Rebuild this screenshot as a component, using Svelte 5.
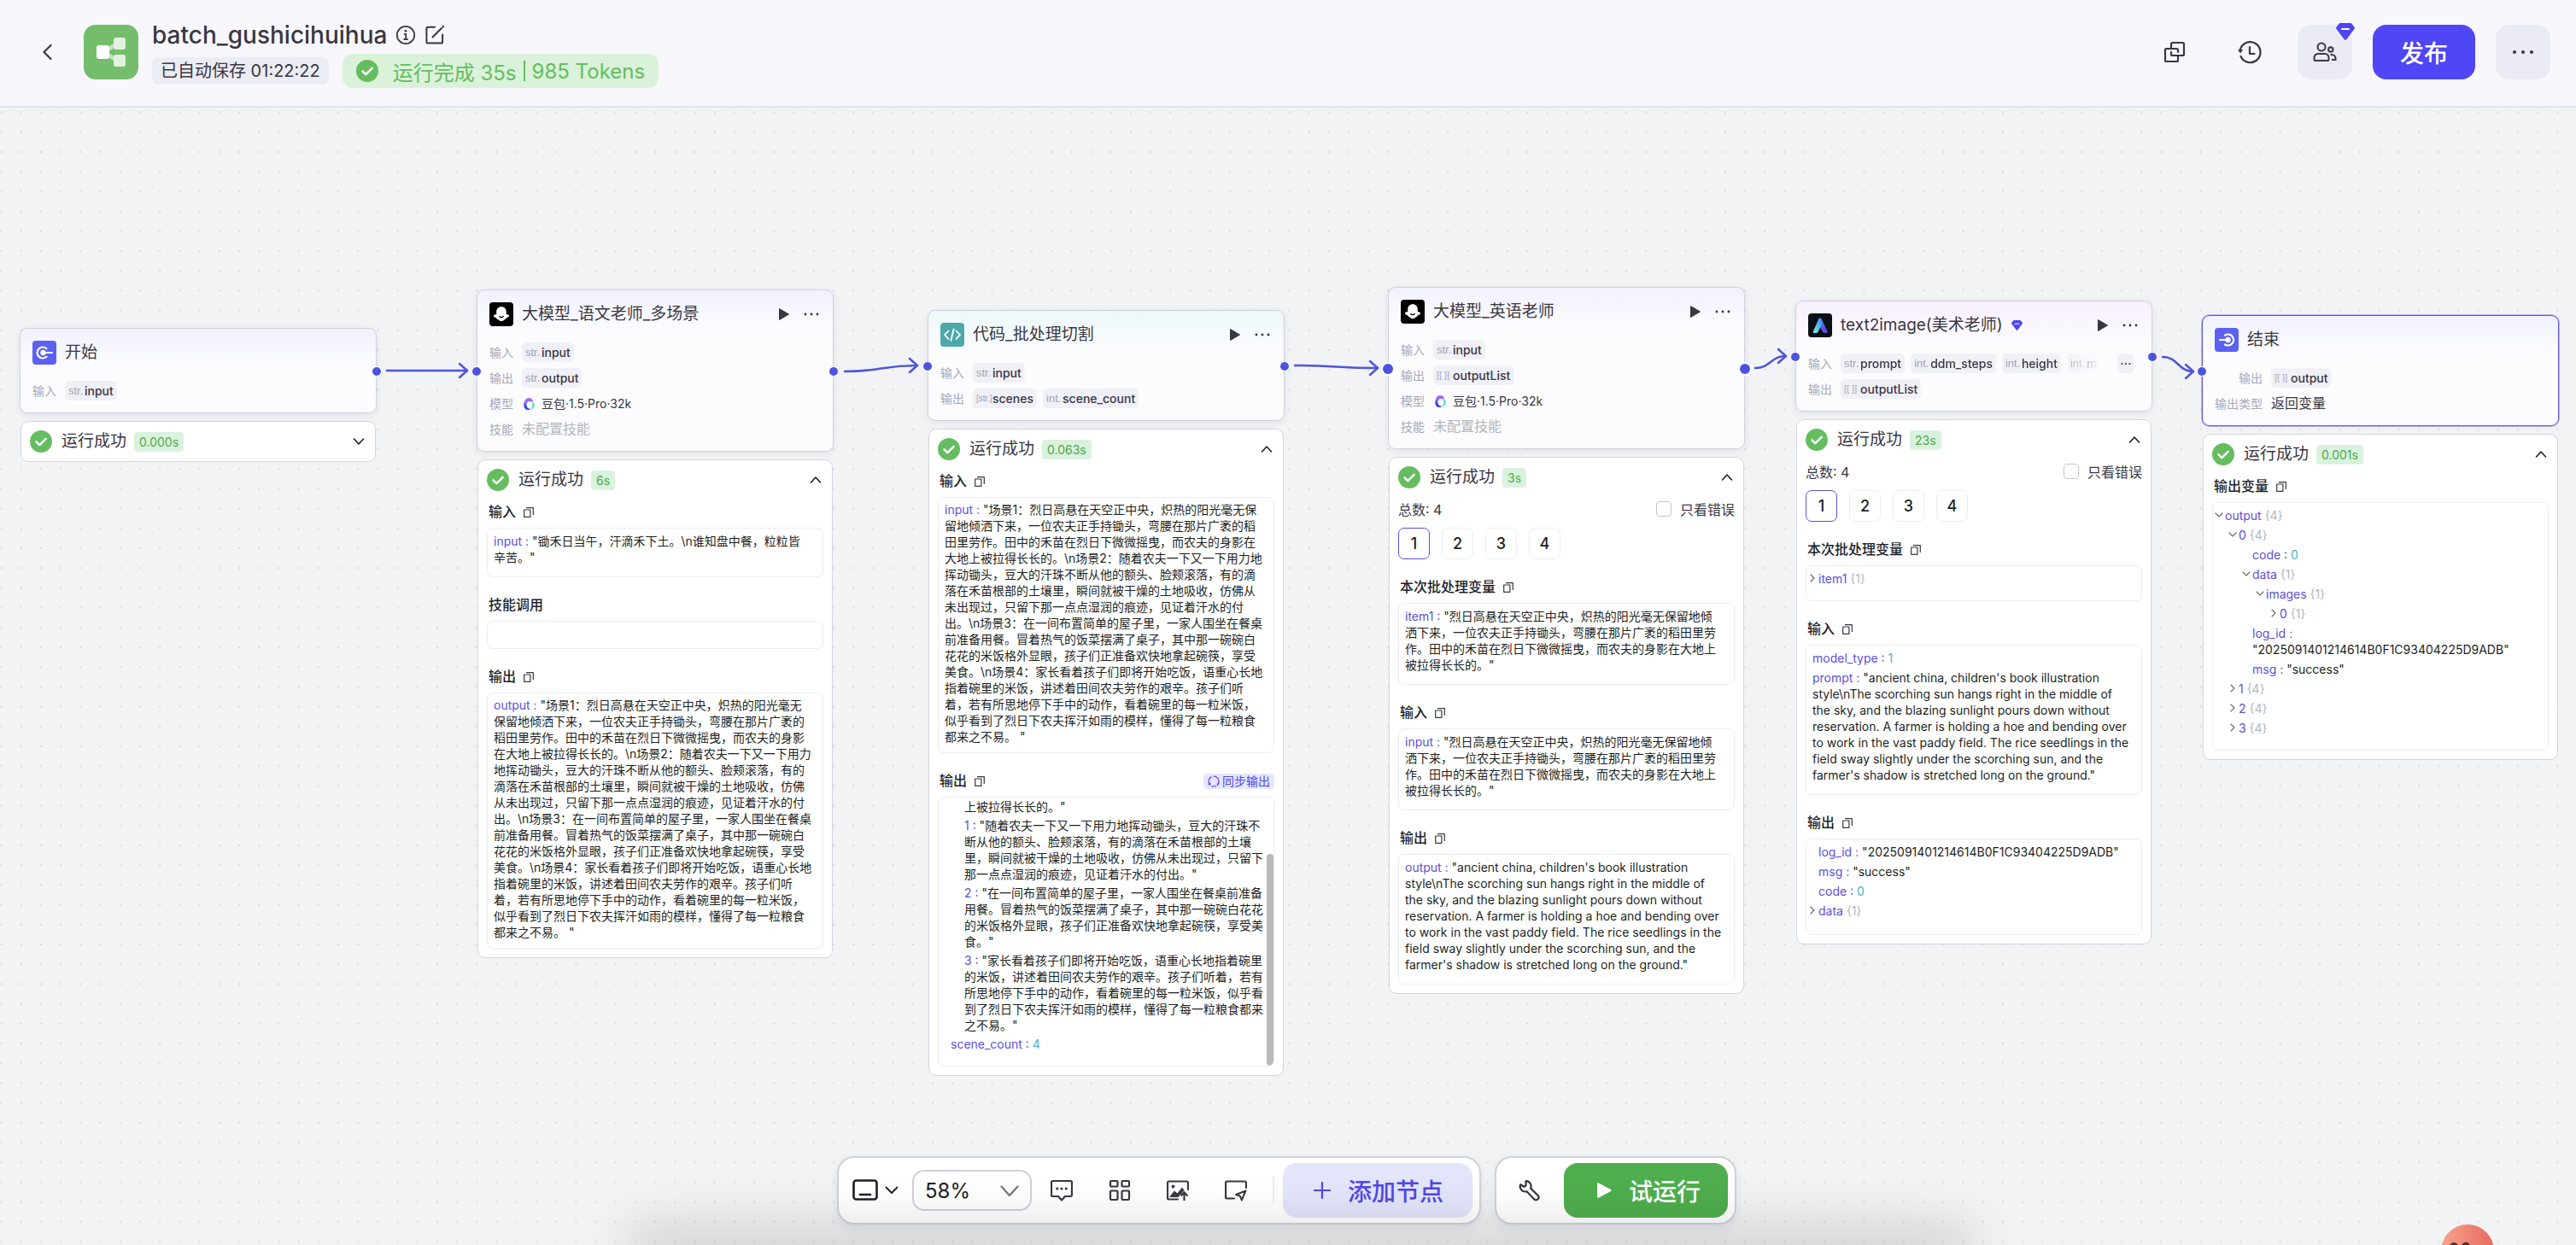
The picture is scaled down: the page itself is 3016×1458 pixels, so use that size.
<script>
  const scene1a = '烈日高悬在天空正中央，炽热的阳光毫无';

  const llmOutput = [
    '"场景1：烈日高悬在天空正中央，炽热的阳光毫无',
    '保留地倾洒下来，一位农夫正手持锄头，弯腰在那片广袤的',
    '稻田里劳作。田中的禾苗在烈日下微微摇曳，而农夫的身影',
    '在大地上被拉得长长的。\\n场景2：随着农夫一下又一下用力',
    '地挥动锄头，豆大的汗珠不断从他的额头、脸颊滚落，有的',
    '滴落在禾苗根部的土壤里，瞬间就被干燥的土地吸收，仿佛',
    '从未出现过，只留下那一点点湿润的痕迹，见证着汗水的付',
    '出。\\n场景3：在一间布置简单的屋子里，一家人围坐在餐桌',
    '前准备用餐。冒着热气的饭菜摆满了桌子，其中那一碗碗白',
    '花花的米饭格外显眼，孩子们正准备欢快地拿起碗筷，享受',
    '美食。\\n场景4：家长看着孩子们即将开始吃饭，语重心长地',
    '指着碗里的米饭，讲述着田间农夫劳作的艰辛。孩子们听',
    '着，若有所思地停下手中的动作，看着碗里的每一粒米饭，',
    '似乎看到了烈日下农夫挥汗如雨的模样，懂得了每一粒粮食',
    '都来之不易。 "'
  ];

  const codeInput = [
    '"场景1：' + scene1a + '保',
    '留地倾洒下来，一位农夫正手持锄头，弯腰在那片广袤的稻',
    '田里劳作。田中的禾苗在烈日下微微摇曳，而农夫的身影在',
    '大地上被拉得长长的。\\n场景2：随着农夫一下又一下用力地',
    '挥动锄头，豆大的汗珠不断从他的额头、脸颊滚落，有的滴',
    '落在禾苗根部的土壤里，瞬间就被干燥的土地吸收，仿佛从',
    '未出现过，只留下那一点点湿润的痕迹，见证着汗水的付',
    '出。\\n场景3：在一间布置简单的屋子里，一家人围坐在餐桌',
    '前准备用餐。冒着热气的饭菜摆满了桌子，其中那一碗碗白',
    '花花的米饭格外显眼，孩子们正准备欢快地拿起碗筷，享受',
    '美食。\\n场景4：家长看着孩子们即将开始吃饭，语重心长地',
    '指着碗里的米饭，讲述着田间农夫劳作的艰辛。孩子们听',
    '着，若有所思地停下手中的动作，看着碗里的每一粒米饭，',
    '似乎看到了烈日下农夫挥汗如雨的模样，懂得了每一粒粮食',
    '都来之不易。 "'
  ];

  const batchItem = [
    '"' + scene1a + '保留地倾',
    '洒下来，一位农夫正手持锄头，弯腰在那片广袤的稻田里劳',
    '作。田中的禾苗在烈日下微微摇曳，而农夫的身影在大地上',
    '被拉得长长的。"'
  ];

  const prompt = [
    '"ancient china, children\'s book illustration',
    'style\\nThe scorching sun hangs right in the middle of',
    'the sky, and the blazing sunlight pours down without',
    'reservation. A farmer is holding a hoe and bending over',
    'to work in the vast paddy field. The rice seedlings in the',
    'field sway slightly under the scorching sun, and the',
    'farmer\'s shadow is stretched long on the ground."'
  ];

  const model = { label: '模型', model: '豆包·1.5·Pro·32k' };
  const skill = { label: '技能', muted: '未配置技能' };
  const str = 'str.';
  const int = 'int.';
  const arr = '[{ }]';

  const nodes = [
    {
      id: 'start', x: 23, y: 258, title: '开始', icon: 'start', right: true,
      rows: [{ label: '输入', tags: [[str, 'input']] }],
      time: '0.000s', open: false, sections: []
    },
    {
      id: 'llm-cn', x: 558, y: 213, title: '大模型_语文老师_多场景', icon: 'llm', left: true, right: true, actions: true,
      rows: [
        { label: '输入', tags: [[str, 'input']] },
        { label: '输出', tags: [[str, 'output']] },
        model, skill
      ],
      time: '6s', open: true,
      sections: [
        { title: '输入', copy: true, lines: [{ k: 'input', v: ['"锄禾日当午，汗滴禾下土。\\n谁知盘中餐，粒粒皆', '辛苦。"'] }] },
        { title: '技能调用', lines: [] },
        { title: '输出', copy: true, long: true, lines: [{ k: 'output', v: llmOutput }] }
      ]
    },
    {
      id: 'code', x: 1086, y: 237, title: '代码_批处理切割', icon: 'code', tint: 'teal', left: true, right: true, actions: true,
      rows: [
        { label: '输入', tags: [[str, 'input']] },
        { label: '输出', tags: [['[str.]', 'scenes'], [int, 'scene_count']] }
      ],
      time: '0.063s', open: true,
      sections: [
        { title: '输入', copy: true, long: true, lines: [{ k: 'input', v: codeInput }] },
        {
          title: '输出', copy: true, sync: true, scroll: true,
          lines: [
            { level: 1, v: ['上被拉得长长的。"'] },
            {
              level: 1, k: '1',
              v: [
                '"随着农夫一下又一下用力地挥动锄头，豆大的汗珠不',
                '断从他的额头、脸颊滚落，有的滴落在禾苗根部的土壤',
                '里，瞬间就被干燥的土地吸收，仿佛从未出现过，只留下',
                '那一点点湿润的痕迹，见证着汗水的付出。"'
              ]
            },
            {
              level: 1, k: '2',
              v: [
                '"在一间布置简单的屋子里，一家人围坐在餐桌前准备',
                '用餐。冒着热气的饭菜摆满了桌子，其中那一碗碗白花花',
                '的米饭格外显眼，孩子们正准备欢快地拿起碗筷，享受美',
                '食。"'
              ]
            },
            {
              level: 1, k: '3',
              v: [
                '"家长看着孩子们即将开始吃饭，语重心长地指着碗里',
                '的米饭，讲述着田间农夫劳作的艰辛。孩子们听着，若有',
                '所思地停下手中的动作，看着碗里的每一粒米饭，似乎看',
                '到了烈日下农夫挥汗如雨的模样，懂得了每一粒粮食都来',
                '之不易。"'
              ]
            },
            { level: 0, k: 'scene_count', num: '4' }
          ]
        }
      ]
    },
    {
      id: 'llm-en', x: 1625, y: 210, title: '大模型_英语老师', icon: 'llm', left: true, right: true, actions: true, big: true,
      rows: [
        { label: '输入', tags: [[str, 'input']] },
        { label: '输出', tags: [[arr, 'outputList']] },
        model, skill
      ],
      time: '3s', open: true, batch: true,
      sections: [
        { title: '本次批处理变量', copy: true, lines: [{ k: 'item1', v: batchItem }] },
        { title: '输入', copy: true, lines: [{ k: 'input', v: batchItem }] },
        { title: '输出', copy: true, lines: [{ k: 'output', v: prompt }] }
      ]
    },
    {
      id: 't2i', x: 2102, y: 226, title: 'text2image(美术老师)', icon: 't2i', tint: 'pink', gem: true, left: true, right: true, actions: true,
      rows: [
        { label: '输入', more: true, tags: [[str, 'prompt'], [int, 'ddm_steps'], [int, 'height'], [int, 'm']] },
        { label: '输出', tags: [[arr, 'outputList']] }
      ],
      time: '23s', open: true, batch: true,
      sections: [
        { title: '本次批处理变量', copy: true, tree: true, lines: [{ level: 0, k: 'item1', count: '{1}', fold: 'closed' }] },
        { title: '输入', copy: true, lines: [{ k: 'model_type', num: '1' }, { k: 'prompt', v: prompt }] },
        {
          title: '输出', copy: true, tree: true,
          lines: [
            { level: 0, k: 'log_id', v: ['"2025091401214614B0F1C93404225D9ADB"'] },
            { level: 0, k: 'msg', v: ['"success"'] },
            { level: 0, k: 'code', num: '0' },
            { level: 0, k: 'data', count: '{1}', fold: 'closed', last: true }
          ]
        }
      ]
    },
    {
      id: 'end', x: 2578, y: 243, title: '结束', icon: 'end', left: true, selected: true, wide: true,
      rows: [
        { label: '输出', tags: [[arr, 'output']] },
        { label: '输出类型', plain: '返回变量' }
      ],
      time: '0.001s', open: true,
      sections: [
        {
          title: '输出变量', copy: true, tree: true,
          lines: [
            { level: 0, k: 'output', count: '{4}', fold: 'open' },
            { level: 1, k: '0', count: '{4}', fold: 'open' },
            { level: 2, k: 'code', num: '0' },
            { level: 2, k: 'data', count: '{1}', fold: 'open' },
            { level: 3, k: 'images', count: '{1}', fold: 'open' },
            { level: 4, k: '0', count: '{1}', fold: 'closed' },
            { level: 2, k: 'log_id', v: ['', '"2025091401214614B0F1C93404225D9ADB"'] },
            { level: 2, k: 'msg', v: ['"success"'] },
            { level: 1, k: '1', count: '{4}', fold: 'closed' },
            { level: 1, k: '2', count: '{4}', fold: 'closed' },
            { level: 1, k: '3', count: '{4}', fold: 'closed' }
          ]
        }
      ]
    }
  ];

  // Each edge runs from a source port to the tip of its arrow.
  const edges = [
    [453, 308, 547, 308],
    [989, 309, 1074, 302],
    [1516, 302, 1613, 305],
    [2055, 305, 2091, 291],
    [2532, 292, 2568, 309]
  ];

  function curve([x1, y1, x2, y2]) {
    const mid = (x1 + x2) / 2;
    return `M${x1} ${y1}C${mid} ${y1} ${mid} ${y2} ${x2} ${y2}`;
  }

  let current = $state({ 'llm-en': 1, t2i: 1 });
</script>

{#snippet check()}
  <svg class="check" viewBox="0 0 26 26" aria-hidden="true">
    <circle cx="13" cy="13" r="13" fill="#65bd60" />
    <path d="M7.5 13.3l3.9 3.9 7.3-7.4" fill="none" stroke="#fff" stroke-width="2.4" stroke-linecap="round" stroke-linejoin="round" />
  </svg>
{/snippet}

{#snippet gem()}
  <svg class="gem" viewBox="0 0 22 20" aria-hidden="true">
    <path d="M5 0h12a2 2 0 0 1 1.6.8l3 4.2a1.6 1.6 0 0 1-.1 2L12.2 19.3a1.6 1.6 0 0 1-2.4 0L.5 7a1.6 1.6 0 0 1-.1-2l3-4.200A2 2 0 0 1 5 0z" fill="#4f46f0" />
    <path d="M7 7h8" stroke="#fff" stroke-width="2" stroke-linecap="round" />
  </svg>
{/snippet}

{#snippet nodeIcon(kind)}
  <svg class="node-icon" viewBox="0 0 28 28" aria-hidden="true">
    {#if kind === 'start'}
      <rect width="28" height="28" rx="4" fill="#5c62f0" />
      <path d="M16.500 9.200A6.500 6.500 0 1 0 16.500 18.800" fill="none" stroke="#fff" stroke-width="2.200" stroke-linecap="round" />
      <circle cx="12.500" cy="14" r="3.200" fill="#fff" />
      <path d="M12 14h11" stroke="#fff" stroke-width="2" stroke-linecap="round" />
    {:else if kind === 'end'}
      <rect width="28" height="28" rx="4" fill="#5c62f0" />
      <path d="M12 8.500A6.500 6.500 0 1 1 12 19.500" fill="none" stroke="#fff" stroke-width="2.200" stroke-linecap="round" />
      <circle cx="15.500" cy="14" r="3.200" fill="#fff" />
      <path d="M6 14h10" stroke="#fff" stroke-width="2" stroke-linecap="round" />
    {:else if kind === 'code'}
      <rect width="28" height="28" rx="4" fill="#4ba9ac" />
      <path d="M9.500 9.500L5 14.200l4.500 4.700M18.500 9.500l4.500 4.700-4.500 4.700M15.600 7.500l-3.200 13.400" fill="none" stroke="#fff" stroke-width="1.800" stroke-linecap="round" stroke-linejoin="round" />
    {:else if kind === 'llm'}
      <rect width="28" height="28" rx="4" fill="#000" />
      <path d="M14 5.200c-3.500 0-5.800 2.500-5.800 6v3.200c-1.500-.3-3 .4-3.200 1.300-.3 1.200 1.300 2 3 2.200.3 1.300 1.300 2.200 2.400 2.300.7 1.200 2.200 1.800 3.600 1.800s2.900-.6 3.600-1.800c1.100-.1 2.100-1 2.400-2.300 1.700-.2 3.300-1 3-2.200-.2-.9-1.700-1.600-3.200-1.300v-3.200c0-3.500-2.300-6-5.800-6z" fill="#fff" />
      <path d="M11.700 16.400c.6.9 1.400 1.300 2.300 1.300s1.700-.4 2.300-1.300" fill="none" stroke="#000" stroke-width="1.200" stroke-linecap="round" />
    {:else}
      <defs>
        <linearGradient id="t2i-a" x1="0" y1="1" x2="1" y2="0">
          <stop offset="0" stop-color="#7df0e0" />
          <stop offset="1" stop-color="#3d7df5" />
        </linearGradient>
        <linearGradient id="t2i-b" x1="0" y1="0" x2="1" y2="1">
          <stop offset="0" stop-color="#3a8df5" />
          <stop offset="1" stop-color="#6a35e8" />
        </linearGradient>
      </defs>
      <rect width="28" height="28" rx="4" fill="#0d0f16" />
      <path d="M12.200 5.800h3l7.400 15.200c.4 1-.2 2-1.300 2h-1.800a3 3 0 0 1-2.700-1.700L11 10z" fill="url(#t2i-b)" />
      <path d="M12.200 6.800a1.800 1.800 0 0 1 3.200 0l1.800 3.600-5.400 11A3 3 0 0 1 9.100 23H7.300c-1.100 0-1.800-1-1.300-2z" fill="url(#t2i-a)" />
    {/if}
  </svg>
{/snippet}

{#snippet tag([type, name])}
  <span class="tag"><span class="type" class:list={type.startsWith('[')}>{type}</span>{name}</span>
{/snippet}

<div class="page">
  <header class="topbar">
    <button class="bare back" aria-label="返回">
      <svg viewBox="0 0 14 20" width="14" height="20"><path d="M11.500 2L3.500 10l8 8" fill="none" stroke="#383743" stroke-width="2.200" stroke-linecap="round" stroke-linejoin="round" /></svg>
    </button>
    <svg class="logo" viewBox="0 0 64 64" aria-hidden="true">
      <rect width="64" height="64" rx="14" fill="#74be6b" />
      <path d="M24 32L42 20M24 32l18 12" stroke="#c0e2bc" stroke-width="5" />
      <rect x="35" y="15" width="14" height="14" rx="3" fill="#e2f2e0" />
      <rect x="35" y="35" width="14" height="14" rx="3" fill="#e2f2e0" />
      <rect x="15" y="24" width="15" height="16" rx="3" fill="#fff" />
    </svg>
    <div class="info">
      <div class="name-row">
        <h1>batch_gushicihuihua</h1>
        <svg viewBox="0 0 24 24" width="24" height="24" aria-hidden="true">
          <circle cx="12" cy="12" r="10.200" fill="none" stroke="#383743" stroke-width="1.800" />
          <circle cx="12" cy="7.300" r="1.400" fill="#383743" />
          <path d="M10 10.800h2.200v6M9.500 17h5.200" fill="none" stroke="#383743" stroke-width="1.800" />
        </svg>
        <button class="bare" aria-label="编辑">
          <svg viewBox="0 0 24 24" width="24" height="24"><path d="M12 2.800H4a1.600 1.600 0 0 0-1.600 1.600V20A1.600 1.600 0 0 0 4 21.600h15.500A1.600 1.600 0 0 0 21.100 20v-8.500M9.500 14.500L20 4M21.300 1.700l.8.8" fill="none" stroke="#383743" stroke-width="2" stroke-linecap="round" /></svg>
        </button>
      </div>
      <div class="status-row">
        <span class="saved">已自动保存 01:22:22</span>
        <span class="done">{@render check()}运行完成 35s<i></i>985 Tokens</span>
      </div>
    </div>
    <div class="actions">
      <button class="square clear" aria-label="复制">
        <svg viewBox="0 0 26 26" width="26" height="26"><path d="M9 7.500V3.500A1.500 1.500 0 0 1 10.500 2h12A1.500 1.500 0 0 1 24 3.500v12a1.500 1.500 0 0 1-1.500 1.500h-12A1.500 1.500 0 0 1 9 15.500V13M17 18.500v4a1.500 1.500 0 0 1-1.500 1.500h-12A1.500 1.500 0 0 1 2 22.500v-12A1.500 1.500 0 0 1 3.500 9h12a1.500 1.500 0 0 1 1.500 1.500V13" fill="none" stroke="#383743" stroke-width="2.200" stroke-linecap="round" /></svg>
      </button>
      <button class="square clear" aria-label="历史">
        <svg viewBox="0 0 30 30" width="30" height="30"><path d="M3.700 13A12 12 0 1 1 4.500 20" fill="none" stroke="#383743" stroke-width="2.200" stroke-linecap="round" /><path d="M.8 12.500l6.400-.6-3 4.500z" fill="#383743" /><path d="M15 9v8h5.500" fill="none" stroke="#383743" stroke-width="2.200" stroke-linecap="round" stroke-linejoin="round" /></svg>
      </button>
      <button class="square collab" aria-label="协作">
        <svg viewBox="0 0 28 24" width="28" height="24"><g fill="none" stroke="#383743" stroke-width="2"><circle cx="10" cy="6" r="4.500" /><path d="M1.500 20.500v-2a4.500 4.500 0 0 1 4.500-4.500h8a4.500 4.500 0 0 1 4.500 4.500v2a1.500 1.500 0 0 1-1.500 1.500H3a1.500 1.500 0 0 1-1.500-1.500z" /><circle cx="20.800" cy="9" r="2.700" /><path d="M20.500 15h1.500a4.500 4.500 0 0 1 4.500 4.500v1.500h-4.500" /></g></svg>
        <span class="badge">{@render gem()}</span>
      </button>
      <button class="publish">发布</button>
      <button class="square" aria-label="更多">
        <svg viewBox="0 0 26 6" width="26" height="6"><g fill="#383743"><circle cx="3" cy="3" r="2" /><circle cx="13" cy="3" r="2" /><circle cx="23" cy="3" r="2" /></g></svg>
      </button>
    </div>
  </header>

  <main class="canvas">
    <svg class="layer" aria-hidden="true">
      <defs>
        <pattern id="grid" width="20" height="20" patternUnits="userSpaceOnUse" patternTransform="translate(-10 -6) scale(1.160)">
          <circle cx="10" cy="10" r="1" fill="#d8dade" />
        </pattern>
      </defs>
      <rect width="100%" height="100%" fill="url(#grid)" />
      <g fill="none" stroke="#4e55d8" stroke-width="2.500" stroke-linecap="round" stroke-linejoin="round">
        {#each edges as e}
          <path d={curve(e)} />
          <path d={`M${e[2] - 9} ${e[3] - 8}l9 8-9 8`} />
        {/each}
      </g>
    </svg>

    {#each nodes as n (n.id)}
      <article class="node" style:left="{n.x}px" style:top="{n.y}px">
        <section class="head {n.tint ?? ''}" class:selected={n.selected} class:big={n.big}>
          {#if n.left}<span class="port in"></span>{/if}
          {#if n.right}<span class="port out"></span>{/if}
          <div class="title-row">
            {@render nodeIcon(n.icon)}
            <h2>{n.title}</h2>
            {#if n.gem}{@render gem()}{/if}
            {#if n.actions}
              <div class="node-actions">
                <button class="bare" aria-label="运行节点"><svg viewBox="0 0 12 14" width="12" height="14"><path d="M0 .8v12.400a.6.6 0 0 0 .9.5l10.600-6.200a.6.6 0 0 0 0-1L.9.3A.6.6 0 0 0 0 .8z" fill="#383743" /></svg></button>
                <button class="bare" aria-label="节点菜单"><svg viewBox="0 0 18 4" width="18" height="4"><g fill="#383743"><circle cx="2" cy="2" r="1.400" /><circle cx="9" cy="2" r="1.400" /><circle cx="16" cy="2" r="1.400" /></g></svg></button>
              </div>
            {/if}
          </div>
          <div class="rows" class:wide={n.wide}>
            {#each n.rows as r}
              <div class="row">
                <span class="label">{r.label}</span>
                {#if r.tags}
                  <div class="tags" class:fade={r.more}>{#each r.tags as t}{@render tag(t)}{/each}</div>
                  {#if r.more}<button class="more" aria-label="更多参数"><svg viewBox="0 0 12 4" width="12" height="4"><g fill="#383743"><circle cx="1.500" cy="2" r="1.100" /><circle cx="6" cy="2" r="1.100" /><circle cx="10.500" cy="2" r="1.100" /></g></svg></button>{/if}
                {:else if r.model}
                  <span class="model">
                    <svg viewBox="0 0 16 16" width="16" height="16" aria-hidden="true">
                      <path d="M3 9C2.600 4 4.500 1 8 1c3 0 4.800 1.500 5 4l-3 .5C7.500 4 6 6 5.500 9z" fill="#a06cf0" />
                      <path d="M11.500 4.500c2.300.6 3.500 2.400 3.500 4.500 0 3-2 5.300-5 5.700 1.400-1.500 2-3.200 2-5.500 0-2-.1-3.300-.5-4.700z" fill="#6fe0cf" />
                      <path d="M3.200 5c-1.500 3.500-1.400 9.300 3 10 2 .2 3.300-.2 4.300-1-3-.2-4.700-1.800-4.800-4.200C3.800 9 3.100 7.500 3.200 5z" fill="#3a47e0" />
                    </svg>{r.model}</span>
                {:else if r.muted}
                  <span class="muted">{r.muted}</span>
                {:else}
                  <span class="plain">{r.plain}</span>
                {/if}
              </div>
            {/each}
          </div>
        </section>

        <section class="result">
          <div class="result-row">
            {@render check()}
            <h3>运行成功</h3>
            <span class="time">{n.time}</span>
            <button class="bare toggle" aria-label={n.open ? '收起' : '展开'}>
              <svg viewBox="0 0 14 10" width="14" height="10"><path d={n.open ? 'M1.500 8L7 2l5.500 6' : 'M1.500 2L7 8l5.500-6'} fill="none" stroke="#1c1f23" stroke-width="1.600" stroke-linecap="round" stroke-linejoin="round" /></svg>
            </button>
          </div>
          {#if n.batch}
            <div class="total-row">
              <span>总数: 4</span>
              <label><input type="checkbox" />只看错误</label>
            </div>
            <div class="pages">
              {#each [1, 2, 3, 4] as p}
                <button class:active={current[n.id] === p} onclick={() => (current[n.id] = p)}>{p}</button>
              {/each}
            </div>
          {/if}
          {#each n.sections as s, i}
            <div class="sec-head" class:first={i === 0 && !n.batch}>
              <h4>{s.title}</h4>
              {#if s.copy}
                <button class="bare" aria-label="复制{s.title}"><svg viewBox="0 0 12 12" width="12" height="12"><path d="M.7 3h7.200v8.300H.7zM3 .7h8.300v8.300" fill="none" stroke="#383743" stroke-width="1.200" stroke-linejoin="round" /></svg></button>
              {/if}
              {#if s.sync}
                <button class="sync"><svg viewBox="0 0 14 14" width="14" height="14" aria-hidden="true"><path d="M2.500 11A6 6 0 0 1 4.500 1.600M6.500 1a6 6 0 0 1 5.300 9.500M9.800 12.300a6 6 0 0 1-5.300.1M2.800 8.500V11H.6M11.500 12.500V10h2" fill="none" stroke="#5147ff" stroke-width="1.200" /></svg>同步输出</button>
              {/if}
            </div>
            <div class="box" class:long={s.long} class:scroll={s.scroll} class:tree={s.tree} class:empty={!s.lines.length}>
              {#each s.lines as l}
                <div class="line {l.level === undefined ? '' : 'l' + l.level}" class:last={l.last}>{#if l.fold}<button class="bare fold" aria-label="折叠"><svg viewBox="0 0 10 10" width="10" height="10"><path d={l.fold === 'open' ? 'M1 3l4 4 4-4' : 'M3 1l4 4-4 4'} fill="none" stroke="#60636b" stroke-width="1.100" stroke-linecap="round" /></svg></button>{/if}{#if l.k}<span class="key">{l.k}{l.count ? '' : ' :'}</span>{' '}{/if}{#if l.count}<span class="count">{l.count}</span>{:else if l.num}<span class="num">{l.num}</span>{:else}{#each l.v as t, j}<span class:next={j > 0}>{t}</span>{/each}{/if}</div>
              {/each}
              {#if s.scroll}<span class="thumb"></span>{/if}
            </div>
          {/each}
        </section>
      </article>
    {/each}

    <div class="toolbar">
      <div class="panel tools">
        <button class="bare mode" aria-label="交互模式">
          <svg viewBox="0 0 30 26" width="30" height="26"><rect x="1.500" y="1.500" width="27" height="22" rx="3" fill="none" stroke="#1c1f23" stroke-width="2.600" /><path d="M9 18h12" stroke="#1c1f23" stroke-width="2.600" stroke-linecap="round" /></svg>
          <svg viewBox="0 0 16 10" width="16" height="10"><path d="M1.500 1.500L8 8l6.500-6.500" fill="none" stroke="#1c1f23" stroke-width="1.800" stroke-linecap="round" stroke-linejoin="round" /></svg>
        </button>
        <div class="zoom">
          <select aria-label="缩放"><option>58%</option></select>
          <svg viewBox="0 0 22 14" width="22" height="14" aria-hidden="true"><path d="M1.500 1.500L11 12l9.500-10.500" fill="none" stroke="#75767f" stroke-width="2.200" stroke-linecap="round" stroke-linejoin="round" /></svg>
        </div>
        <div class="icons">
          <button class="bare" aria-label="添加注释"><svg viewBox="0 0 26 26" width="26" height="26"><path d="M2.500 2h21a1.500 1.500 0 0 1 1.500 1.500v15a1.500 1.500 0 0 1-1.500 1.500H17l-4 4.500L9 20H2.500A1.500 1.500 0 0 1 1 18.500v-15A1.500 1.500 0 0 1 2.500 2z" fill="none" stroke="#383743" stroke-width="2.200" stroke-linejoin="round" /><g fill="#383743"><circle cx="7.800" cy="11" r="1.600" /><circle cx="13" cy="11" r="1.600" /><circle cx="18.200" cy="11" r="1.600" /></g></svg></button>
          <button class="bare" aria-label="优化布局"><svg viewBox="0 0 26 26" width="26" height="26"><g fill="none" stroke="#383743" stroke-width="2.200"><rect x="2" y="2" width="8.500" height="6.500" rx="1" /><rect x="2" y="13.500" width="8.500" height="10.500" rx="1" /><rect x="15.500" y="2" width="8.500" height="6.500" rx="1" /><rect x="15.500" y="13.500" width="8.500" height="10.500" rx="1" /></g></svg></button>
          <button class="bare" aria-label="导出图片"><svg viewBox="0 0 26 26" width="26" height="26"><path d="M13 23.500H2.500A1.500 1.500 0 0 1 1 22V4a1.500 1.500 0 0 1 1.500-1.500h21A1.500 1.500 0 0 1 25 4v8" fill="none" stroke="#383743" stroke-width="2.200" stroke-linecap="round" /><circle cx="7.500" cy="8.500" r="2" fill="#383743" /><path d="M3 21l6-7.500 3.500 3 5.500-7 2.500 3.500-7 8z" fill="#383743" /><path d="M20.500 25V16M16.500 19.500l4-4.200 4 4.200" fill="none" stroke="#383743" stroke-width="2.200" /></svg></button>
          <button class="bare" aria-label="整理节点"><svg viewBox="0 0 26 26" width="26" height="26"><path d="M11 22.500H2.500A1.500 1.500 0 0 1 1 21V4a1.500 1.500 0 0 1 1.500-1.500h21A1.500 1.500 0 0 1 25 4v6" fill="none" stroke="#383743" stroke-width="2.200" stroke-linecap="round" /><path d="M24.500 13.500L13 18l5 1.800 1.800 4.700z" fill="none" stroke="#383743" stroke-width="2" stroke-linejoin="round" /></svg></button>
        </div>
        <span class="divider"></span>
        <button class="add"><svg viewBox="0 0 20 20" width="20" height="20" aria-hidden="true"><path d="M10 1v18M1 10h18" stroke="#5147e6" stroke-width="2.200" stroke-linecap="round" /></svg>添加节点</button>
      </div>
      <div class="panel run">
        <button class="bare wrench" aria-label="调试"><svg viewBox="0 0 26 26" width="26" height="26"><path d="M8.500 2.200v5.300L6.300 8.800 2.200 6.200a6 6 0 0 0 7.300 8l8.800 9.200a3 3 0 0 0 4.300-.1 3 3 0 0 0 0-4.200l-8.500-8.500a6 6 0 0 0-5.600-8.400z" fill="none" stroke="#383743" stroke-width="2.200" stroke-linejoin="round" /></svg></button>
        <button class="try"><svg viewBox="0 0 17 18" width="17" height="18" aria-hidden="true"><path d="M0 1.200v15.600a1 1 0 0 0 1.500.9L16 9.900a1 1 0 0 0 0-1.800L1.500.3A1 1 0 0 0 0 1.200z" fill="#fff" /></svg>试运行</button>
      </div>
    </div>
    <span class="dock-shadow"></span>
    <svg class="avatar" viewBox="0 0 62 62" width="62" height="62" aria-hidden="true">
      <defs>
        <linearGradient id="avatar-bg" x1="0" x2="1"><stop offset="0" stop-color="#f4a58f" /><stop offset="1" stop-color="#e8685e" /></linearGradient>
      </defs>
      <circle cx="31" cy="31" r="31" fill="url(#avatar-bg)" />
      <path d="M11 25q4-5 8 0M25 25q4-6 8 0" fill="none" stroke="#5a2a2a" stroke-width="3" stroke-linecap="round" />
    </svg>
  </main>
</div>

<style>
  :global(body) {
    margin: 0;
  }
  .page {
    display: flex;
    flex-direction: column;
    height: 100vh;
    min-width: 1200px;
    overflow: hidden;
    font-family: Inter, 'Noto Sans CJK SC', sans-serif;
    color: #383743;
    background: #f1f3f5;
  }
  button {
    font: inherit;
    color: inherit;
    border: 0;
    margin: 0;
    padding: 0;
    background: none;
    cursor: pointer;
    display: inline-flex;
    align-items: center;
    justify-content: center;
  }
  svg {
    display: block;
    flex: none;
  }
  h1, h2, h3, h4 {
    margin: 0;
    font-weight: 500;
  }

  .topbar {
    display: flex;
    align-items: center;
    flex: none;
    box-sizing: border-box;
    height: 126px;
    padding: 0 30px 2px 48px;
    background: #f8f7fd;
    border-bottom: 2px solid #e1e3ea;
  }
  .back {
    margin-right: 36px;
  }
  .logo {
    width: 64px;
    height: 64px;
    margin-right: 16px;
  }
  .info {
    display: flex;
    flex-direction: column;
    gap: 2px;
    padding-top: 2px;
  }
  .name-row {
    display: flex;
    align-items: center;
    gap: 10px;
    height: 40px;
  }
  h1 {
    font-size: 28px;
    line-height: 40px;
  }
  .status-row {
    display: flex;
    align-items: center;
    gap: 16px;
  }
  .saved {
    padding: 0 10px;
    border-radius: 8px;
    background: #ececf5;
    font-size: 20px;
    line-height: 32px;
  }
  .done {
    display: flex;
    align-items: center;
    height: 40px;
    padding: 0 16px;
    border-radius: 12px;
    background: #d9f2d9;
    color: #65bd60;
    font-size: 24px;
  }
  .done .check {
    margin-right: 17px;
  }
  .done i {
    width: 2px;
    height: 24px;
    margin: 0 8px;
    background: #65bd60;
  }
  .actions {
    display: flex;
    gap: 24px;
    margin-left: auto;
  }
  .square {
    position: relative;
    width: 64px;
    height: 64px;
    border-radius: 16px;
    background: #ebebf5;
  }
  .clear {
    background: none;
  }
  .badge {
    position: absolute;
    top: -2px;
    right: -3px;
  }
  .badge .gem {
    width: 22px;
    height: 20px;
  }
  .publish {
    width: 120px;
    border-radius: 16px;
    background: #4f46f5;
    color: #fff;
    font-size: 28px;
    font-weight: 500;
  }

  .canvas {
    position: relative;
    flex: 1;
    overflow: hidden;
  }
  .layer {
    position: absolute;
    inset: 0;
    width: 100%;
    height: 100%;
  }
  .node {
    position: absolute;
    display: flex;
    flex-direction: column;
    align-items: stretch;
    gap: 9px;
    width: 418px;
  }
  .head {
    position: relative;
    padding: 14px;
    border: 1px solid #cfd0e0;
    border-radius: 9px;
    background: linear-gradient(#f2f2ff, #fcfcff 50px);
    box-shadow: 0 2px 8px rgba(40, 40, 80, 0.08);
  }
  .head.teal {
    background: linear-gradient(#eef8f9, #fcfcff 50px);
  }
  .head.pink {
    background: linear-gradient(#f8effe, #fcfcff 50px);
  }
  .head.selected {
    border-color: #5a50e0;
    box-shadow: 0 0 0 1px #b9b6f2;
  }
  .port {
    position: absolute;
    top: calc(50% - 4px);
    width: 10px;
    height: 10px;
    border-radius: 50%;
    background: #4d53e0;
    box-shadow: 0 0 0 1px #fff;
  }
  .port.in {
    left: -6px;
  }
  .port.out {
    right: -6px;
  }
  .big .port {
    box-shadow: 0 0 0 1px #4d53e0, 0 0 0 3px #fff;
  }
  .title-row {
    display: flex;
    align-items: center;
    height: 28px;
    margin-bottom: 19px;
  }
  .node-icon {
    width: 28px;
    height: 28px;
    margin-right: 10px;
  }
  h2, h3 {
    font-size: 19px;
    font-weight: 400;
    line-height: 28px;
    white-space: nowrap;
  }
  .title-row .gem {
    width: 13px;
    height: 12px;
    margin-left: 10px;
  }
  .node-actions {
    display: flex;
    align-items: center;
    gap: 17px;
    margin: 0 2px 0 auto;
  }
  .rows {
    display: flex;
    flex-direction: column;
    gap: 7px;
  }
  .row {
    display: flex;
    align-items: center;
    gap: 10px;
    height: 23px;
    font-size: 14px;
    line-height: 23px;
    white-space: nowrap;
  }
  .label {
    flex: none;
    width: 28px;
    color: #a6a7b8;
    text-align: right;
  }
  .wide .label {
    width: 56px;
  }
  .tags {
    display: flex;
    gap: 7px;
    min-width: 0;
  }
  .tags.fade {
    mask-image: linear-gradient(to right, #000 84%, transparent);
  }
  .tag {
    display: flex;
    align-items: center;
    flex: none;
    height: 23px;
    padding: 0 4px;
    border-radius: 5px;
    background: #f0f0f7;
    font-weight: 500;
  }
  .type {
    width: 19px;
    color: #a0a1b3;
    font-family: 'Liberation Sans Narrow', 'Liberation Sans', sans-serif;
    font-size: 13px;
    font-weight: 400;
  }
  .type.list {
    font-size: 10px;
  }
  .more {
    flex: none;
    width: 19px;
    height: 23px;
    margin: 0 7px 0 auto;
    border-radius: 5px;
    background: #f0f0f7;
  }
  .model {
    display: flex;
    align-items: center;
    gap: 7px;
  }
  .muted, .plain {
    font-size: 16px;
  }
  .muted {
    color: #b3b4bd;
  }

  .result {
    margin: 0 1px;
    padding: 10px;
    border: 1px solid #d3d4e0;
    border-radius: 9px;
    background: #fff;
  }
  .result-row {
    display: flex;
    align-items: center;
    height: 26px;
  }
  .check {
    width: 26px;
    height: 26px;
  }
  .result-row .check {
    margin-right: 11px;
  }
  .time {
    height: 23px;
    margin-left: 9px;
    padding: 0 6px;
    border-radius: 4px;
    background: #d9f2dd;
    color: #4ea94b;
    font-size: 14px;
    line-height: 23px;
  }
  .toggle {
    margin: 0 2px 0 auto;
  }
  .total-row {
    display: flex;
    align-items: center;
    justify-content: space-between;
    height: 24px;
    margin-top: 12px;
    font-size: 16px;
  }
  .total-row label {
    display: flex;
    align-items: center;
    gap: 10px;
  }
  .total-row input {
    appearance: none;
    width: 18px;
    height: 18px;
    margin: 0;
    border: 1px solid #c3c4d0;
    border-radius: 4px;
    background: #fff;
  }
  .pages {
    display: flex;
    gap: 14px;
    margin-top: 10px;
  }
  .pages button {
    width: 37px;
    height: 37px;
    border: 1px solid #ececf2;
    border-radius: 7px;
    color: #1c1f23;
    font-size: 18px;
    font-weight: 500;
  }
  .pages .active {
    border-color: #5a50e0;
  }
  .sec-head {
    display: flex;
    align-items: center;
    gap: 9px;
    height: 23px;
    margin: 21px 0 7px 2px;
  }
  .sec-head.first {
    margin-top: 13px;
  }
  h4 {
    color: #1c1f2b;
    font-size: 16px;
    line-height: 23px;
  }
  .sync {
    gap: 3px;
    height: 18px;
    margin-left: auto;
    padding: 0 5px;
    border-radius: 4px;
    background: #e6e6fd;
    color: #5147e6;
    font-size: 14px;
    line-height: 18px;
  }
  .box {
    position: relative;
    display: flex;
    flex-direction: column;
    gap: 4px;
    padding: 5px 7px 13px;
    border: 1px solid #ebecf0;
    border-radius: 7px;
    overflow: hidden;
  }
  .box.long {
    padding: 4px 7px 9px;
  }
  .box.tree {
    padding-bottom: 16px;
  }
  .box.empty {
    height: 13px;
  }
  .box.scroll {
    gap: 3px;
    padding: 1px 7px 16px;
  }
  .line {
    position: relative;
    color: #1c1f23;
    font-size: 14px;
    line-height: 19px;
    white-space: pre;
  }
  .next {
    display: block;
  }
  .l0 { margin-left: 7px; }
  .l1 { margin-left: 23px; }
  .l2 { margin-left: 39px; }
  .l3 { margin-left: 55px; }
  .l4 { margin-left: 71px; }
  .last {
    margin-bottom: 2px;
  }
  .fold {
    position: absolute;
    left: -12px;
    top: 4px;
    height: 10px;
  }
  .key {
    color: #5b50dc;
  }
  .num {
    color: #4cb0cc;
  }
  .count {
    color: #b4b6c0;
  }
  .thumb {
    position: absolute;
    right: 0;
    bottom: 0;
    width: 8px;
    height: 79%;
    border-radius: 4px;
    background: #b9b9b9;
  }

  .toolbar {
    position: absolute;
    left: 0;
    right: 3px;
    bottom: 24px;
    display: flex;
    justify-content: center;
    gap: 16px;
  }
  .panel {
    display: flex;
    align-items: center;
    padding: 6px 8px;
    border: 2px solid #d0d1dd;
    border-radius: 20px;
    background: #fff;
    box-shadow: 0 4px 12px rgba(40, 40, 80, 0.08);
  }
  .mode {
    gap: 8px;
    margin: 0 16px 0 8px;
  }
  .zoom {
    position: relative;
    margin-right: 22px;
  }
  .zoom select {
    appearance: none;
    width: 140px;
    height: 48px;
    padding: 0 13px;
    border: 2px solid #d0d1dd;
    border-radius: 14px;
    background: transparent;
    color: #1c1f23;
    font: 24px Inter, 'Noto Sans CJK SC', sans-serif;
  }
  .zoom svg {
    position: absolute;
    top: 18px;
    right: 15px;
    pointer-events: none;
  }
  .icons {
    display: flex;
    gap: 42px;
  }
  .divider {
    width: 2px;
    height: 32px;
    margin: 0 10px 0 30px;
    background: #ededf2;
  }
  .add, .try {
    gap: 20px;
    height: 64px;
    padding: 0 34px 0 36px;
    border-radius: 16px;
    font-size: 28px;
    font-weight: 500;
    white-space: nowrap;
  }
  .add {
    background: #e3e5fb;
    color: #5147e6;
  }
  .try {
    padding: 0 32px 0 39px;
    background: #4fae4d;
    color: #fff;
  }
  .wrench {
    margin: 0 27px 0 18px;
  }
  .dock-shadow {
    position: absolute;
    left: 25%;
    right: 24%;
    bottom: -10px;
    height: 10px;
    box-shadow: 0 0 64px 16px rgba(0, 0, 0, 0.2);
    pointer-events: none;
  }
  .avatar {
    position: absolute;
    right: 96px;
    bottom: -38px;
  }
</style>
